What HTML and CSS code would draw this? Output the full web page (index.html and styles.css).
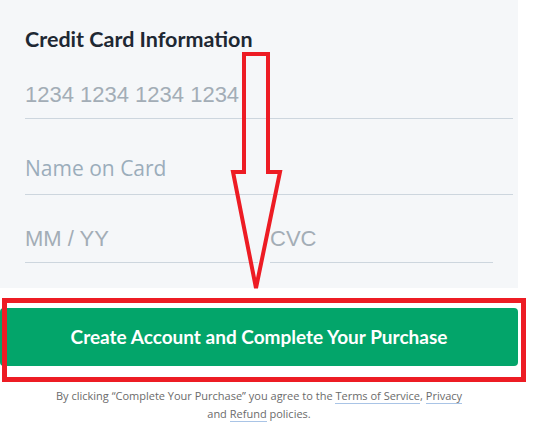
FILE: index.html
```html
<!DOCTYPE html>
<html>
<head>
<meta charset="utf-8">
<link rel="stylesheet" href="styles.css">
</head>
<body>
<div class="page">
  <section class="panel">
    <h2 class="title">Credit Card Information</h2>
    <div class="field card"><span class="ph arial">1234 1234 1234 1234</span></div>
    <div class="field name"><span class="ph open">Name on Card</span></div>
    <div class="row">
      <div class="field exp"><span class="ph arial">MM / YY</span></div>
      <div class="field cvc"><span class="ph arial">CVC</span></div>
    </div>
  </section>
  <button class="cta">Create Account and Complete Your Purchase</button>
  <p class="terms">By clicking “Complete Your Purchase” you agree to the <a>Terms of Service</a>, <a>Privacy</a><br>and <a>Refund</a> policies.</p>

  <div class="highlight"></div>
  <svg class="arrow" width="547" height="448" viewBox="0 0 547 448">
    <polygon points="244,54 268,54 268,172 280,172 256,288 233,172 244,172" fill="none" stroke="#ed1c24" stroke-width="4" stroke-linejoin="miter"/>
  </svg>
</div>
</body>
</html>
```
FILE: styles.css
```css
html, body { margin: 0; padding: 0; background: #fff; }
.page { position: relative; width: 547px; height: 448px; overflow: hidden; }
.panel {
  width: 518px;
  height: 288px;
  box-sizing: border-box;
  background: #f5f7f9;
  padding: 25px 5px 0 25px;
}
.title {
  margin: 0;
  font-family: "Lato", sans-serif;
  font-weight: 700;
  font-size: 21.5px;
  line-height: 28px;
  color: #1e2833;
}
.field {
  border-bottom: 1px solid #cdd6de;
  padding-bottom: 12px;
}
.card { margin-top: 31px; }
.name { margin-top: 38px; padding-bottom: 15px; }
.row { display: flex; gap: 12px; margin-top: 33px; width: 468px; }
.exp { width: 233px; }
.cvc { flex: 1; }
.ph { display: block; color: #a3adb6; line-height: 22px; }
.arial { font-family: "Liberation Sans", Arial, sans-serif; font-size: 22px; }
.open { font-family: "Open Sans", sans-serif; font-size: 21px; color: #9badbb; }
.cta {
  display: block;
  margin: 20px 0 0 0;
  width: 518px;
  height: 58px;
  box-sizing: border-box;
  border: 0;
  border-radius: 4px;
  background: #03a56a;
  color: #fff;
  font-family: "Lato", sans-serif;
  font-weight: 700;
  font-size: 19px;
  padding: 0 0 2px 0;
}
.terms {
  width: 518px;
  margin: 21px 0 0 0;
  text-align: center;
  font-family: "Open Sans", sans-serif;
  font-size: 11px;
  line-height: 18px;
  color: #6b6b6b;
}
.terms a { text-decoration: none; border-bottom: 1px solid #a9c4e6; }
.highlight {
  position: absolute;
  left: 2px;
  top: 298px;
  width: 524px;
  height: 84px;
  box-sizing: border-box;
  border: 5px solid #ed1c24;
}
.arrow { position: absolute; left: 0; top: 0; }
```
